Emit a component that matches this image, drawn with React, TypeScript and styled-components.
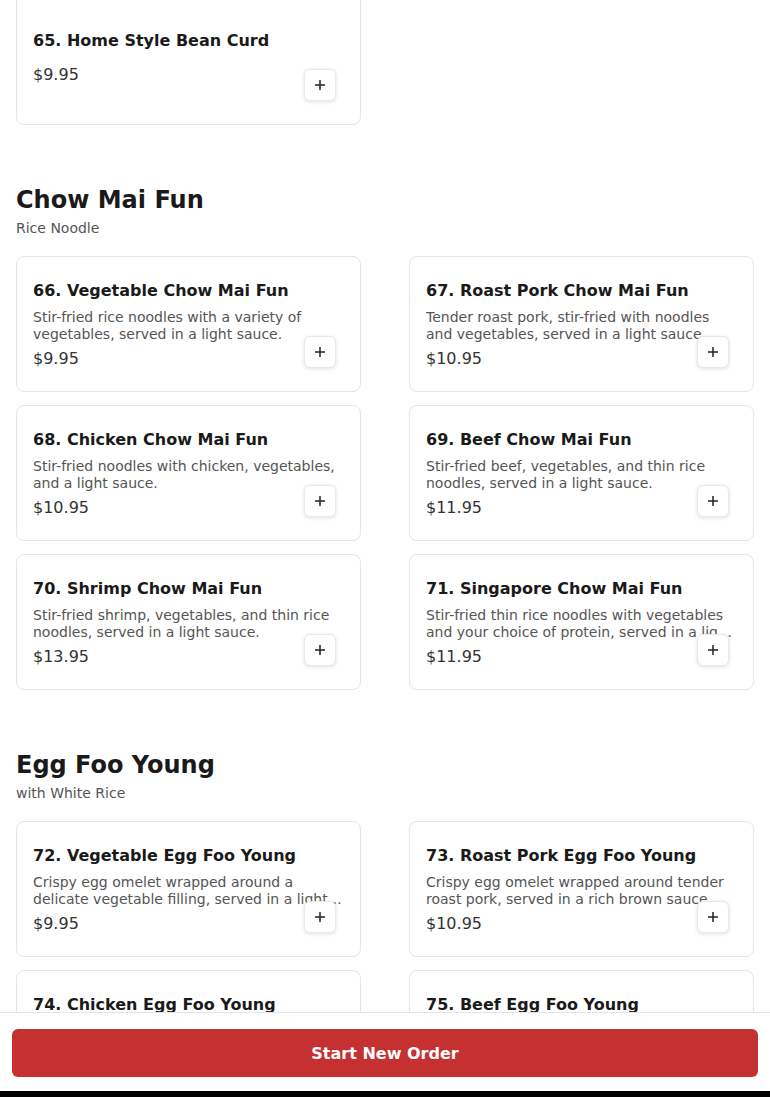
import React from "react";
import styled, { createGlobalStyle } from "styled-components";

const GlobalStyle = createGlobalStyle`
  html, body { margin: 0; padding: 0; background: #ffffff; }
  body { font-family: "DejaVu Sans", "Noto Sans", sans-serif; color: #1a1a1a; }
  * { box-sizing: border-box; }
`;

type Item = { no: number; name: string; desc?: string; price: string };
type Section = { title?: string; subtitle?: string; items: Item[] };

const sections: Section[] = [
  { items: [{ no: 65, name: "Home Style Bean Curd", price: "$9.95" }] },
  {
    title: "Chow Mai Fun",
    subtitle: "Rice Noodle",
    items: [
      { no: 66, name: "Vegetable Chow Mai Fun", desc: "Stir-fried rice noodles with a variety of vegetables, served in a light sauce.", price: "$9.95" },
      { no: 67, name: "Roast Pork Chow Mai Fun", desc: "Tender roast pork, stir-fried with noodles and vegetables, served in a light sauce.", price: "$10.95" },
      { no: 68, name: "Chicken Chow Mai Fun", desc: "Stir-fried noodles with chicken, vegetables, and a light sauce.", price: "$10.95" },
      { no: 69, name: "Beef Chow Mai Fun", desc: "Stir-fried beef, vegetables, and thin rice noodles, served in a light sauce.", price: "$11.95" },
      { no: 70, name: "Shrimp Chow Mai Fun", desc: "Stir-fried shrimp, vegetables, and thin rice noodles, served in a light sauce.", price: "$13.95" },
      { no: 71, name: "Singapore Chow Mai Fun", desc: "Stir-fried thin rice noodles with vegetables and your choice of protein, served in a light curry sauce.", price: "$11.95" },
    ],
  },
  {
    title: "Egg Foo Young",
    subtitle: "with White Rice",
    items: [
      { no: 72, name: "Vegetable Egg Foo Young", desc: "Crispy egg omelet wrapped around a delicate vegetable filling, served in a light brown sauce.", price: "$9.95" },
      { no: 73, name: "Roast Pork Egg Foo Young", desc: "Crispy egg omelet wrapped around tender roast pork, served in a rich brown sauce.", price: "$10.95" },
      { no: 74, name: "Chicken Egg Foo Young", desc: "Crispy egg omelet wrapped around tender chicken, served in a rich brown sauce.", price: "$10.95" },
      { no: 75, name: "Beef Egg Foo Young", desc: "Crispy egg omelet wrapped around tender beef, served in a rich brown sauce.", price: "$11.95" },
    ],
  },
];

const Page = styled.main`
  padding: 0 16px 120px;
  margin-top: -11px;
`;

const SectionBlock = styled.section<{ $first?: boolean }>`
  margin-top: ${(p) => (p.$first ? "0" : "60px")};
`;

const SectionTitle = styled.h2`
  margin: 0;
  font-size: 24px;
  line-height: 30px;
  font-weight: 700;
  color: #1a1a1a;
`;

const SectionSubtitle = styled.p`
  margin: 3px 0 0;
  font-size: 14px;
  line-height: 20px;
  color: #555555;
`;

const Grid = styled.div<{ $withHeader?: boolean }>`
  display: grid;
  grid-template-columns: 1fr 1fr;
  column-gap: 48px;
  row-gap: 13px;
  margin-top: ${(p) => (p.$withHeader ? "18px" : "0")};
`;

const Card = styled.article`
  position: relative;
  min-height: 136px;
  border: 1px solid #e5e5e5;
  border-radius: 8px;
  background: #ffffff;
  padding: 17px 16px 15px;
  display: flex;
  flex-direction: column;
  justify-content: center;
`;

const ItemName = styled.h3`
  margin: 0 0 8px;
  font-size: 16px;
  line-height: 20px;
  font-weight: 700;
  color: #1a1a1a;
`;

const ItemDesc = styled.p`
  margin: 0;
  font-size: 14px;
  line-height: 17px;
  color: #555555;
  display: -webkit-box;
  -webkit-line-clamp: 2;
  -webkit-box-orient: vertical;
  overflow: hidden;
`;

const ItemPrice = styled.div`
  margin-top: 6px;
  font-size: 16px;
  line-height: 20px;
  color: #333333;
`;

const AddButton = styled.button`
  position: absolute;
  right: 24px;
  bottom: 23px;
  width: 32px;
  height: 32px;
  border: 1px solid #e8e8e8;
  border-radius: 6px;
  background: #ffffff;
  box-shadow: 0 1px 4px rgba(0, 0, 0, 0.12);
  display: flex;
  align-items: center;
  justify-content: center;
  padding: 0;
  cursor: pointer;
  color: #222222;
`;

const Footer = styled.footer`
  position: fixed;
  left: 0;
  right: 0;
  bottom: 0;
  display: flex;
  flex-direction: column;
`;

const FooterPanel = styled.div`
  background: #ffffff;
  border-top: 1px solid #e5e5e5;
  padding: 16px 12px 14px;
`;

const FooterStrip = styled.div`
  height: 6px;
  background: #000000;
`;

const StartButton = styled.button`
  width: 100%;
  height: 48px;
  border: none;
  border-radius: 6px;
  background: #c53030;
  color: #ffffff;
  font-family: "DejaVu Sans", sans-serif;
  font-size: 16px;
  font-weight: 700;
  cursor: pointer;
`;

const PlusIcon = () => (
  <svg width="12" height="12" viewBox="0 0 12 12" aria-hidden="true">
    <path d="M6 1v10M1 6h10" stroke="currentColor" strokeWidth="1.5" fill="none" />
  </svg>
);

export default function App() {
  return (
    <>
      <GlobalStyle />
      <Page>
        {sections.map((s, i) => (
          <SectionBlock key={i} $first={i === 0}>
            {s.title && <SectionTitle>{s.title}</SectionTitle>}
            {s.subtitle && <SectionSubtitle>{s.subtitle}</SectionSubtitle>}
            <Grid $withHeader={!!s.title}>
              {s.items.map((it) => (
                <Card key={it.no}>
                  <ItemName>
                    {it.no}. {it.name}
                  </ItemName>
                  {it.desc && <ItemDesc>{it.desc}</ItemDesc>}
                  <ItemPrice>{it.price}</ItemPrice>
                  <AddButton aria-label={`Add ${it.name}`}>
                    <PlusIcon />
                  </AddButton>
                </Card>
              ))}
            </Grid>
          </SectionBlock>
        ))}
      </Page>
      <Footer>
        <FooterPanel>
          <StartButton>Start New Order</StartButton>
        </FooterPanel>
        <FooterStrip />
      </Footer>
    </>
  );
}
